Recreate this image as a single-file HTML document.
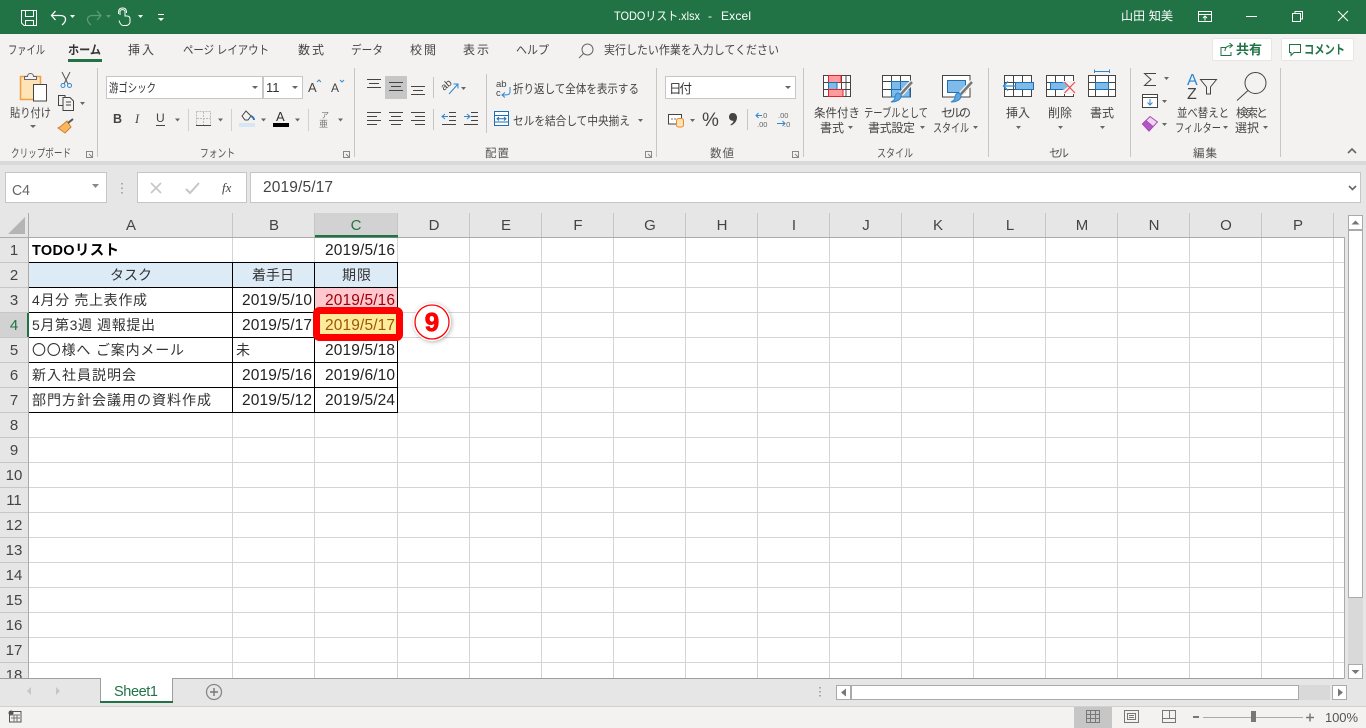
<!DOCTYPE html>
<html lang="ja"><head><meta charset="utf-8"><title>TODOリスト.xlsx - Excel</title>
<style>
html,body{margin:0;padding:0;background:#e6e6e6;width:1366px;height:728px;overflow:hidden}
svg{position:absolute;left:0;top:0;display:block}
text{font-family:"Liberation Sans","Noto Sans CJK JP",sans-serif;fill:#444;font-size:12px}
.c{font-size:15.5px;fill:#222}
.j{font-size:14px;fill:#333}
.h{font-size:15px;fill:#444;text-anchor:middle}
.g{font-size:11.5px;fill:#555}
.tw{fill:#fff}
.i{fill:none;stroke:#444}
.d{fill:#666}
</style></head><body>
<svg width="1366" height="728" viewBox="0 0 1366 728">
<defs>
<filter id="sh" x="-30%" y="-30%" width="160%" height="160%"><feDropShadow dx="1" dy="1" stdDeviation="2" flood-color="#000" flood-opacity=".3"/></filter>
</defs>

<!-- backgrounds -->
<rect width="1366" height="34" fill="#217346"/>
<rect y="34" width="1366" height="127" fill="#f3f2f1"/>
<rect y="161" width="1366" height="4" fill="#d9d9d9"/>
<rect y="165" width="1366" height="563" fill="#e6e6e6"/>

<!-- title bar -->
<g fill="none" stroke="#fff">
<path d="M21.500 10.500H36.500V25.500H24L21.500 23Z"/>
<path d="M25.500 10.500V16.500H33.500V10.500M25.500 25.500V20.500H33.500V25.500"/>
<path d="M52 15.500H60C67 15.500 67 21 62 25M55.500 11L51.500 15.500L55.500 20" stroke-width="1.300"/>
<path d="M101 15.500H93C86 15.500 86 21 91 25M97 11L101 15.500L97 20" stroke="#5f9a7c" stroke-width="1.300"/>
<path d="M120 15V11.500C120 9 125 9 125 11.500V16H127C129 16 130 17 130 19V22C130 24 128 25.500 126 25.500H123C121 25.500 119.500 22 119 20.500"/>
<path d="M118.500 14C118.500 10 119 8 122.500 8C126 8 126.500 10 126.500 13"/>
<path d="M1198.500 11.500H1211.500V21.500H1198.500ZM1198.500 14.500H1211.500M1205 20.500V16M1203 18L1205 16L1207 18"/>
<path d="M1246 16.500H1257"/>
<path d="M1292.500 13.500H1300.500V21.500H1292.500ZM1295 13V11.500H1302.500V19H1301"/>
<path d="M1338 11L1348 21M1348 11L1338 21"/>
</g>
<path d="M70 15h5l-2.500 3zM138 15h5l-2.500 3zM158 18h6l-3 3z" fill="#fff"/>
<path d="M106 15h5l-2.500 3z" fill="#5f9a7c"/>
<rect x="158" y="14" width="6" height="1" fill="#fff"/>
<text x="614" y="20" class="tw" textLength="86" lengthAdjust="spacingAndGlyphs">TODOリスト.xlsx</text>
<text x="708" y="20" class="tw">-</text>
<text x="721" y="20" class="tw" textLength="30">Excel</text>
<text x="1121" y="20" class="tw" textLength="52">山田 知美</text>

<!-- ribbon tabs -->
<text x="8" y="54" textLength="37" lengthAdjust="spacingAndGlyphs">ファイル</text>
<text x="68" y="54" textLength="33" lengthAdjust="spacingAndGlyphs" style="font-weight:700;fill:#333">ホーム</text>
<text x="128" y="54" textLength="26">挿入</text>
<text x="183" y="54" textLength="86" lengthAdjust="spacingAndGlyphs">ページ レイアウト</text>
<text x="298" y="54" textLength="26">数式</text>
<text x="351" y="54" textLength="32" lengthAdjust="spacingAndGlyphs">データ</text>
<text x="410" y="54" textLength="26">校閲</text>
<text x="463" y="54" textLength="26">表示</text>
<text x="516" y="54" textLength="33" lengthAdjust="spacingAndGlyphs">ヘルプ</text>
<text x="604" y="54" textLength="175" lengthAdjust="spacingAndGlyphs">実行したい作業を入力してください</text>
<rect x="68" y="59" width="34" height="3" fill="#217346"/>
<circle cx="587.500" cy="49.500" r="5.500" fill="none" stroke="#666"/>
<path d="M583.500 53.500L579 58" stroke="#666" fill="none"/>
<rect x="1212.500" y="38.500" width="59" height="22" rx="1" fill="#fff" stroke="#e6e6e6"/>
<rect x="1281.500" y="38.500" width="72" height="22" rx="1" fill="#fff" stroke="#e6e6e6"/>
<path d="M1226 47.500H1221V55.500H1231V52M1225 51C1225 47 1228 45.500 1232 45.500M1229.500 43L1232.500 45.500L1229.500 48" fill="none" stroke="#217346"/>
<text x="1236" y="54" textLength="26" style="font-size:13px;font-weight:700;fill:#217346">共有</text>
<path d="M1289.500 44.500H1300.500V52.500H1294L1291 55.500V52.500H1289.500Z" fill="none" stroke="#217346"/>
<text x="1304" y="54" textLength="41" lengthAdjust="spacingAndGlyphs" style="font-size:12.500px;font-weight:700;fill:#217346">コメント</text>

<!-- group dividers -->
<path d="M97.500 68V157M354.500 68V157M656.500 68V157M803.500 68V157M988.500 68V157M1130.500 68V157M1280.500 68V157" stroke="#c6c6c6"/>
<path d="M1348 153l4-4 4 4" fill="none" stroke="#666" stroke-width="1.600"/>
<g fill="none" stroke="#888">
<path d="M86.500 151.500h6v6h-6zM89 154l3 3"/>
<path d="M343.500 151.500h6v6h-6zM346 154l3 3"/>
<path d="M645.500 151.500h6v6h-6zM648 154l3 3"/>
<path d="M792.500 151.500h6v6h-6zM795 154l3 3"/>
</g>

<!-- clipboard group -->
<rect x="20.500" y="76.500" width="20" height="23" fill="#fde3b5" stroke="#f0a040" stroke-width="1.500"/>
<path d="M24.500 76.500h3c0-4 6-4 6 0h3v3h-12z" fill="#f3f2f1" stroke="#666"/>
<rect x="33.500" y="84.500" width="13" height="16.500" fill="#fff" stroke="#444"/>
<text x="10" y="117" textLength="41" lengthAdjust="spacingAndGlyphs">貼り付け</text>
<path class="d" d="M30 125h6l-3 3zM80 102h5l-2.500 3z"/>
<path d="M62 72L68 84M70 72L64 84" stroke="#555" fill="none"/>
<circle cx="63" cy="85.500" r="2" fill="none" stroke="#2e86d0"/>
<circle cx="69.500" cy="85.500" r="2" fill="none" stroke="#2e86d0"/>
<path d="M63 105.500H58.500V95.500H65V97M63 97.500H70L73.500 101V110.500H63V97.500ZM66 102H71M66 105H71" fill="none" stroke="#444"/>
<path d="M60 127L67 121L71 127L65 133L58 128Z" fill="#f8b860" stroke="#d08030"/>
<path d="M68 123L73 119" stroke="#555" stroke-width="2"/>
<text x="11" y="157" class="g" textLength="60" lengthAdjust="spacingAndGlyphs">クリップボード</text>

<!-- font group -->
<rect x="106.500" y="76.500" width="156" height="22" fill="#fff" stroke="#c6c6c6"/>
<rect x="263.500" y="76.500" width="39" height="22" fill="#fff" stroke="#c6c6c6"/>
<text x="109" y="92" textLength="47" lengthAdjust="spacingAndGlyphs" style="fill:#333">游ゴシック</text>
<text x="266" y="92" style="fill:#333;font-size:13px">11</text>
<path class="d" d="M252 86h6l-3 3zM292 86h6l-3 3z"/>
<text x="308" y="92" style="font-size:13px">A</text>
<path d="M317 82l2-2 2 2" fill="none" stroke="#3a87c8"/>
<text x="331" y="92">A</text>
<path d="M340 80l2 2 2-2" fill="none" stroke="#3a87c8"/>
<text x="113" y="123" style="font-size:12.500px;font-weight:700">B</text>
<text x="135" y="123" style="font-size:12.500px;font-style:italic;font-family:'Liberation Serif',serif">I</text>
<text x="156" y="122">U</text>
<path d="M156 125.500h9" stroke="#444"/>
<path class="d" d="M175 118.500h5l-2.500 3zM218 118.500h5l-2.500 3zM261 118.500h5l-2.500 3zM295 118.500h5l-2.500 3zM338 118.500h5l-2.500 3z"/>
<path d="M196.500 111.500H210.500V125M196.500 111.500V125M203.500 112V125M197 118.500H210" fill="none" stroke="#bbb" stroke-dasharray="2 1"/>
<path d="M196 125.500H211" stroke="#444"/>
<path d="M188.500 109V131M231.500 109V131M308.500 109V131" stroke="#d0d0d0"/>
<rect x="239" y="123" width="16" height="4" fill="#d6e6f4"/>
<path d="M242 116l4-5 5 5-3 4h-3z" fill="none" stroke="#444"/>
<path d="M251 116c2 1 3 2 3 4" fill="none" stroke="#2e75b6" stroke-width="2"/>
<text x="276" y="121" style="font-size:13px;fill:#333">A</text>
<rect x="273" y="123" width="16" height="4" fill="#000"/>
<text x="321" y="118" style="font-size:8px;fill:#777">ア</text>
<text x="319" y="127" style="font-size:9px;fill:#777">亜</text>
<text x="200" y="157" class="g" textLength="35" lengthAdjust="spacingAndGlyphs">フォント</text>

<!-- alignment group -->
<rect x="385" y="76" width="22" height="23" fill="#c6c6c6"/>
<g stroke="#444" fill="none">
<path d="M367 79.500H381M369 83.500H379M367 87.500H381"/>
<path d="M389 82.500H403M391 86.500H401M389 90.500H403"/>
<path d="M411 86.500H425M413 90.500H423M411 94.500H425"/>
<path d="M367 112.500H381M367 116.500H377M367 120.500H381M367 124.500H377"/>
<path d="M389 112.500H403M391 116.500H401M389 120.500H403M391 124.500H401"/>
<path d="M411 112.500H425M415 116.500H425M411 120.500H425M415 124.500H425"/>
<path d="M449 112.500H456M449 116.500H456M449 120.500H456M442 124.500H456"/>
<path d="M471 112.500H478M471 116.500H478M471 120.500H478M464 124.500H478"/>
</g>
<path d="M442 116.500H448M445 114L442 116.500L445 119M464 116.500H470M467 114L470 116.500L467 119" fill="none" stroke="#2e86d0"/>
<text transform="translate(444 91) rotate(-40)" style="font-size:10px;fill:#444">ab</text>
<path d="M449 94L458 84M453.500 84H458V88.500" fill="none" stroke="#2e86d0"/>
<path class="d" d="M461 87h5l-2.500 3z"/>
<path d="M433.500 77V98M433.500 109V130M486.500 74V133" stroke="#c6c6c6"/>
<text x="496" y="87" style="font-size:9.500px;fill:#444">ab</text>
<text x="496" y="96" style="font-size:9.500px;fill:#444">c</text>
<path d="M510 87V92C510 95 507 95 502 95M505 92.500L502 95L505 97.500" fill="none" stroke="#2e86d0"/>
<text x="513" y="93" textLength="126" lengthAdjust="spacingAndGlyphs">折り返して全体を表示する</text>
<rect x="494.500" y="111.500" width="14" height="14" fill="#fff" stroke="#1f6fb5"/>
<path d="M494.500 115.500H508.500M494.500 122H508.500" stroke="#1f6fb5"/>
<path d="M497 118.700H506M499 117L497 118.700L499 120.500M504 117L506 118.700L504 120.500" fill="none" stroke="#1f6fb5"/>
<text x="513" y="125" textLength="117" lengthAdjust="spacingAndGlyphs">セルを結合して中央揃え</text>
<path class="d" d="M638 119h5l-2.500 3z"/>
<text x="485" y="157" class="g" textLength="24">配置</text>

<!-- number group -->
<rect x="665.500" y="76.500" width="130" height="22" fill="#fff" stroke="#c6c6c6"/>
<text x="669" y="93" textLength="23" style="font-size:12.500px;fill:#333">日付</text>
<path class="d" d="M785 86h6l-3 3zM690 119h5l-2.500 3z"/>
<rect x="668.500" y="114.500" width="13" height="9.500" fill="#fff" stroke="#444"/>
<path d="M671 119H679" stroke="#777" stroke-dasharray="2 1"/>
<rect x="676.500" y="118.500" width="7" height="8.500" rx="2" fill="#fde3b5" stroke="#ed8b2c"/>
<text x="702" y="126" style="font-size:19px;fill:#444">%</text>
<path d="M732.500 113C736 113 737 115.500 737 117.500C737 121 734.500 124 731 125.500L730.500 124.500C732.500 123.500 733.500 122 733.500 120.800C731 121 729 119.500 729 117C729 114.800 730.500 113 732.500 113Z" fill="#444"/>
<path d="M747.500 109V130" stroke="#c6c6c6"/>
<text x="761" y="118" style="font-size:7.500px;fill:#666">.0</text>
<text x="757" y="127" style="font-size:7.500px;fill:#666">.00</text>
<text x="778" y="118" style="font-size:7.500px;fill:#666">.00</text>
<text x="784" y="127" style="font-size:7.500px;fill:#666">.0</text>
<path d="M756 115.500H762M758.500 113L756 115.500L758.500 118M777 123.500H785M782.500 121L785 123.500L782.500 126" fill="none" stroke="#2e86d0"/>
<text x="710" y="157" class="g" textLength="24">数値</text>

<!-- styles group -->
<rect x="823.500" y="75.500" width="27" height="21" fill="#fff" stroke="#444"/>
<path d="M823.500 82.500H850.500M823.500 89.500H850.500M841.500 75.500V96.500M846 75.500V96.500" stroke="#444" fill="none"/>
<rect x="828.500" y="75.500" width="12.500" height="7" fill="#ff9a9f" stroke="#e0252b"/>
<rect x="828.500" y="82.500" width="8.500" height="7" fill="#7fbbe9" stroke="#1f6fb5"/>
<rect x="828.500" y="89.500" width="14.500" height="7" fill="#ff9a9f" stroke="#e0252b"/>
<text x="814" y="117" textLength="46" lengthAdjust="spacingAndGlyphs">条件付き</text>
<text x="820" y="132" textLength="24">書式</text>
<path class="d" d="M848 126h5l-2.500 3z"/>

<rect x="882.500" y="75.500" width="28" height="21.500" fill="#fff" stroke="#444"/>
<path d="M882.500 81.500H910.500M882.500 89.500H910.500M891.500 75.500V97M900.500 75.500V81" stroke="#444" fill="none"/>
<rect x="891.500" y="81.500" width="18.500" height="15.500" fill="#7fbbe9" stroke="#1f6fb5"/>
<path d="M891.500 89.500H910M900.500 81.500V97" stroke="#1f6fb5" fill="none"/>
<path d="M901 94L912 82" stroke="#f3f2f1" stroke-width="5"/>
<path d="M901 94L912 82" stroke="#777" stroke-width="2.500"/>
<path d="M891 102C896 102 902 100 901 94.500C898 91.500 895 93.500 895 97.500C895 99.500 893 101 891 102Z" fill="#5ea6e0" stroke="#2e86d0"/>
<text x="864" y="117" textLength="64" lengthAdjust="spacingAndGlyphs">テーブルとして</text>
<text x="868" y="132" textLength="47">書式設定</text>
<path class="d" d="M920 126h5l-2.500 3z"/>

<rect x="942.500" y="75.500" width="27.500" height="21.500" fill="#fff" stroke="#444"/>
<rect x="947.500" y="80.500" width="18" height="12" fill="#7fbbe9" stroke="#1f6fb5"/>
<path d="M961 94L972 82" stroke="#f3f2f1" stroke-width="5"/>
<path d="M961 94L972 82" stroke="#777" stroke-width="2.500"/>
<path d="M951 102C956 102 962 100 961 94.500C958 91.500 955 93.500 955 97.500C955 99.500 953 101 951 102Z" fill="#5ea6e0" stroke="#2e86d0"/>
<text x="941" y="117" textLength="30">セルの</text>
<text x="933" y="132" textLength="36" lengthAdjust="spacingAndGlyphs">スタイル</text>
<path class="d" d="M973 126h5l-2.500 3z"/>
<text x="877" y="157" class="g" textLength="36" lengthAdjust="spacingAndGlyphs">スタイル</text>

<!-- cells group -->
<rect x="1004.500" y="75.500" width="27" height="21" fill="#fff" stroke="#444"/>
<path d="M1004.500 82.500H1031.500M1004.500 89.500H1031.500M1013.500 75.500V96.500M1022.500 75.500V96.500" stroke="#444" fill="none"/>
<rect x="1015.500" y="82.500" width="18" height="7" fill="#7fbbe9" stroke="#1f6fb5"/>
<path d="M1003.500 86H1016M1008 81.500L1003.500 86L1008 90.500" fill="none" stroke="#2e86d0" stroke-width="1.300"/>
<rect x="1046.500" y="75.500" width="27" height="21" fill="#fff" stroke="#444"/>
<path d="M1046.500 82.500H1073.500M1046.500 89.500H1073.500M1055.500 75.500V96.500M1064.500 75.500V96.500" stroke="#444" fill="none"/>
<rect x="1050.500" y="82.500" width="13" height="7" fill="#7fbbe9" stroke="#1f6fb5"/>
<rect x="1064" y="81" width="12" height="13" fill="#f3f2f1"/>
<path d="M1063.500 82.500L1068 86L1063.500 89.500Z" fill="#7fbbe9" stroke="#7fbbe9"/>
<path d="M1064.500 82L1075 93M1075 82L1064.500 93" stroke="#f3484d" fill="none" stroke-width="1.200"/>
<rect x="1088.500" y="75.500" width="27" height="21" fill="#fff" stroke="#444"/>
<path d="M1088.500 82.500H1115.500M1088.500 89.500H1115.500M1095.500 75.500V96.500M1108.500 75.500V96.500" stroke="#444" fill="none"/>
<rect x="1095.500" y="82.500" width="13" height="7" fill="#7fbbe9" stroke="#1f6fb5"/>
<path d="M1094.500 69.500V73M1109.500 69.500V73M1094.500 71.500H1109.500" stroke="#2e86d0" fill="none"/>
<text x="1006" y="117" textLength="24">挿入</text>
<text x="1048" y="117" textLength="24">削除</text>
<text x="1090" y="117" textLength="24">書式</text>
<path class="d" d="M1016 126h5l-2.500 3zM1058 126h5l-2.500 3zM1100 126h5l-2.500 3z"/>
<text x="1049" y="157" class="g" textLength="20">セル</text>

<!-- editing group -->
<path d="M1156 73.500H1144.500L1151 79.500L1144.500 85.500H1156" fill="none" stroke="#444"/>
<path class="d" d="M1164 77h5l-2.500 3zM1162 100h5l-2.500 3zM1162 123h5l-2.500 3z"/>
<rect x="1142.500" y="94.500" width="15" height="13" fill="#fff" stroke="#444"/>
<path d="M1142.500 97.500H1157.500" stroke="#444"/>
<path d="M1150 99V105M1147.500 102.500L1150 105L1152.500 102.500" fill="none" stroke="#2e86d0"/>
<path d="M1142.500 124L1150 116.500L1157.500 122L1149 131Z" fill="#f0d5f2" stroke="#a64db5"/>
<path d="M1142.500 124L1146 120.500L1153 126.500L1149 131Z" fill="#b655c6" stroke="#a64db5"/>
<text x="1187" y="85" style="font-size:16px;fill:#2e86d0">A</text>
<text x="1187" y="99" style="font-size:16px;fill:#444">Z</text>
<path d="M1200.500 79.500H1216.500L1210.500 87V94L1206.500 94V87Z" fill="none" stroke="#444"/>
<circle cx="1255.500" cy="83" r="10.500" fill="none" stroke="#444"/>
<path d="M1248 90.500L1237 100.500" stroke="#444" fill="none"/>
<text x="1177" y="117" textLength="52" lengthAdjust="spacingAndGlyphs">並べ替えと</text>
<text x="1175" y="132" textLength="46" lengthAdjust="spacingAndGlyphs">フィルター</text>
<path class="d" d="M1223 126h5l-2.500 3zM1263 126h5l-2.500 3z"/>
<text x="1236" y="117" textLength="32">検索と</text>
<text x="1235" y="132" textLength="24">選択</text>
<text x="1193" y="157" class="g" textLength="24">編集</text>

<!-- formula bar -->
<rect x="5.500" y="172.500" width="101" height="30" fill="#fff" stroke="#c6c6c6"/>
<text x="12" y="195" textLength="18" lengthAdjust="spacingAndGlyphs" style="font-size:15px;fill:#666">C4</text>
<path d="M92 184h7l-3.500 4z" fill="#888"/>
<path d="M122 183v1.500M122 187.500v1.500M122 192v1.500" stroke="#aaa" stroke-width="2"/>
<rect x="137.500" y="172.500" width="109" height="30" fill="#fff" stroke="#c6c6c6"/>
<path d="M151 183L161 193M161 183L151 193" stroke="#c6c6c6" stroke-width="1.600" fill="none"/>
<path d="M186 189L190 193L199 183" stroke="#c6c6c6" stroke-width="2" fill="none"/>
<text x="222" y="192" style="font-size:13px;font-style:italic;font-family:'Liberation Serif',serif;fill:#444">fx</text>
<rect x="250.500" y="172.500" width="1110" height="30" fill="#fff" stroke="#c6c6c6"/>
<text x="263" y="192" textLength="70" style="font-size:15.500px;fill:#444">2019/5/17</text>
<path d="M1349 186l3.500 3.500 3.500-3.500" fill="none" stroke="#666" stroke-width="1.600"/>

<!-- headers -->
<path d="M25 217V234H8Z" fill="#b5b5b5"/>
<rect x="315" y="213" width="83" height="24" fill="#d2d2d2"/>
<rect x="0" y="313" width="28" height="24" fill="#d2d2d2"/>
<path d="M232.500 213V237M314.500 213V237M397.500 213V237M469.500 213V237M541.500 213V237M613.500 213V237M685.500 213V237M757.500 213V237M829.500 213V237M901.500 213V237M973.500 213V237M1045.500 213V237M1117.500 213V237M1189.500 213V237M1261.500 213V237M1333.500 213V237" stroke="#c6c6c6"/>
<path d="M0 262.500H28M0 287.500H28M0 312.500H28M0 337.500H28M0 362.500H28M0 387.500H28M0 412.500H28M0 437.500H28M0 462.500H28M0 487.500H28M0 512.500H28M0 537.500H28M0 562.500H28M0 587.500H28M0 612.500H28M0 637.500H28M0 662.500H28" stroke="#c6c6c6"/>
<text class="h" x="131" y="230">A</text>
<text class="h" x="274" y="230">B</text>
<text class="h" x="356" y="230" style="fill:#217346">C</text>
<text class="h" x="434" y="230">D</text>
<text class="h" x="506" y="230">E</text>
<text class="h" x="578" y="230">F</text>
<text class="h" x="650" y="230">G</text>
<text class="h" x="722" y="230">H</text>
<text class="h" x="794" y="230">I</text>
<text class="h" x="866" y="230">J</text>
<text class="h" x="938" y="230">K</text>
<text class="h" x="1010" y="230">L</text>
<text class="h" x="1082" y="230">M</text>
<text class="h" x="1154" y="230">N</text>
<text class="h" x="1226" y="230">O</text>
<text class="h" x="1298" y="230">P</text>
<text class="h" x="14" y="255">1</text>
<text class="h" x="14" y="280">2</text>
<text class="h" x="14" y="305">3</text>
<text class="h" x="14" y="330" style="fill:#217346">4</text>
<text class="h" x="14" y="355">5</text>
<text class="h" x="14" y="380">6</text>
<text class="h" x="14" y="405">7</text>
<text class="h" x="14" y="430">8</text>
<text class="h" x="14" y="455">9</text>
<text class="h" x="14" y="480">10</text>
<text class="h" x="14" y="505">11</text>
<text class="h" x="14" y="530">12</text>
<text class="h" x="14" y="555">13</text>
<text class="h" x="14" y="580">14</text>
<text class="h" x="14" y="605">15</text>
<text class="h" x="14" y="630">16</text>
<text class="h" x="14" y="655">17</text>
<text class="h" x="14" y="680">18</text>

<!-- sheet -->
<rect x="29" y="238" width="1315" height="440" fill="#fff"/>
<rect x="29" y="263" width="368" height="24" fill="#ddebf7"/>
<rect x="315" y="288" width="82" height="24" fill="#ffc7ce"/>
<path d="M232.500 238V678M314.500 238V678M397.500 238V678M469.500 238V678M541.500 238V678M613.500 238V678M685.500 238V678M757.500 238V678M829.500 238V678M901.500 238V678M973.500 238V678M1045.500 238V678M1117.500 238V678M1189.500 238V678M1261.500 238V678M1333.500 238V678" stroke="#d4d4d4"/>
<path d="M29 262.500H1344M29 287.500H1344M29 312.500H1344M29 337.500H1344M29 362.500H1344M29 387.500H1344M29 412.500H1344M29 437.500H1344M29 462.500H1344M29 487.500H1344M29 512.500H1344M29 537.500H1344M29 562.500H1344M29 587.500H1344M29 612.500H1344M29 637.500H1344M29 662.500H1344" stroke="#d4d4d4"/>
<path d="M29 262.500H398M29 287.500H398M29 312.500H398M29 337.500H398M29 362.500H398M29 387.500H398M29 412.500H398M232.500 262V413M314.500 262V413M397.500 262V413" stroke="#000"/>
<path d="M28.500 213V678" stroke="#ababab"/>
<path d="M0 237.500H1344.500V678" fill="none" stroke="#ababab"/>
<rect x="315" y="235" width="83" height="2.500" fill="#217346"/>
<rect x="27" y="313" width="2" height="24" fill="#217346"/>

<text x="32" y="255" textLength="87" style="font-size:14.500px;font-weight:700;fill:#000">TODOリスト</text>
<text x="110" y="280" textLength="42" class="j">タスク</text>
<text x="252" y="280" textLength="42" class="j">着手日</text>
<text x="342" y="280" textLength="29" class="j">期限</text>
<text x="32" y="305" textLength="115" class="j">4月分 売上表作成</text>
<text x="32" y="330" textLength="123" class="j">5月第3週 週報提出</text>
<text x="32" y="355" textLength="152" class="j">〇〇様へ ご案内メール</text>
<text x="236" y="355" textLength="13" class="j">未</text>
<text x="32" y="380" textLength="104" class="j">新入社員説明会</text>
<text x="32" y="405" textLength="179" class="j">部門方針会議用の資料作成</text>
<text x="242" y="305" textLength="70" class="c">2019/5/10</text>
<text x="242" y="330" textLength="70" class="c">2019/5/17</text>
<text x="242" y="380" textLength="70" class="c">2019/5/16</text>
<text x="242" y="405" textLength="70" class="c">2019/5/12</text>
<text x="325" y="255" textLength="70" class="c">2019/5/16</text>
<text x="325" y="305" textLength="70" class="c" style="fill:#9c0006">2019/5/16</text>
<text x="325" y="355" textLength="70" class="c">2019/5/18</text>
<text x="325" y="380" textLength="70" class="c">2019/6/10</text>
<text x="325" y="405" textLength="70" class="c">2019/5/24</text>

<!-- highlighted cell and callout -->
<rect x="320" y="314" width="76" height="20" fill="#ffeb9c"/>
<text x="325" y="330" textLength="70" class="c" style="fill:#9c5700">2019/5/17</text>
<rect x="316.500" y="310.500" width="83" height="27" rx="3" fill="none" stroke="#ff0000" stroke-width="7"/>
<circle cx="432" cy="322" r="19" fill="#fff" filter="url(#sh)"/>
<circle cx="432" cy="322" r="17" fill="none" stroke="#ff0000" stroke-width="1.300"/>
<text x="432" y="331" text-anchor="middle" style="font-size:26px;font-weight:700;fill:#ff0000;stroke:#ff0000;stroke-width:.8">9</text>

<!-- sheet tab bar -->
<rect x="0" y="678" width="1366" height="28" fill="#e6e6e6"/>
<path d="M0 678.500H100.500M172.500 678.500H1344.500" stroke="#9e9e9e"/>
<rect x="100.500" y="678" width="72" height="23" fill="#fff"/>
<path d="M100.500 678V702M172.500 678V702" stroke="#9e9e9e"/>
<rect x="100" y="701" width="73" height="2" fill="#217346"/>
<text x="114" y="696" textLength="44" style="font-size:14.500px;fill:#217346">Sheet1</text>
<path d="M31 687V695L27 691ZM56 687V695L60 691Z" fill="#c6c6c6"/>
<circle cx="214" cy="692" r="7.500" fill="none" stroke="#888" stroke-width="1.300"/>
<path d="M210 692H218M214 688V696" stroke="#777" stroke-width="1.400"/>
<path d="M820 687v1.500M820 691v1.500M820 695v1.500" stroke="#aaa" stroke-width="2"/>

<!-- horizontal scrollbar -->
<rect x="836.500" y="685.500" width="14" height="14" fill="#fff" stroke="#aaa"/>
<path d="M846 688.500V696.500L841 692.500Z" fill="#777"/>
<rect x="851.500" y="685.500" width="447" height="14" fill="#fff" stroke="#aaa"/>
<rect x="1299" y="685" width="31" height="15" fill="#d9d9d9"/>
<rect x="1332.500" y="685.500" width="14" height="14" fill="#fff" stroke="#aaa"/>
<path d="M1338 688.500V696.500L1343 692.500Z" fill="#777"/>

<!-- vertical scrollbar -->
<rect x="1348" y="215" width="15" height="463" fill="#d9d9d9"/>
<rect x="1348.500" y="215.500" width="14" height="14" fill="#fff" stroke="#aaa"/>
<path d="M1351.500 224.500H1359.500L1355.500 220.500Z" fill="#777"/>
<rect x="1348.500" y="230.500" width="14" height="367" fill="#fff" stroke="#aaa"/>
<rect x="1348.500" y="664.500" width="14" height="14" fill="#fff" stroke="#aaa"/>
<path d="M1351.500 670H1359.500L1355.500 674Z" fill="#777"/>

<!-- status bar -->
<rect y="706" width="1366" height="22" fill="#f3f2f1"/>
<path d="M0 706.500H1366" stroke="#d0d0d0"/>
<circle cx="11" cy="713" r="2.500" fill="#555"/>
<rect x="9.500" y="711.500" width="11.500" height="10.500" fill="none" stroke="#555"/>
<path d="M11 715H20M11 718H20M14 715V722M17 715V722" stroke="#777"/>
<rect x="1074" y="707" width="38" height="21" fill="#c6c6c6"/>
<path d="M1086.500 710.500H1099.500V722.500H1086.500ZM1086.500 714.500H1099.500M1086.500 718.500H1099.500M1090.500 710.500V722.500M1095.500 710.500V722.500" fill="none" stroke="#777"/>
<path d="M1124.500 710.500H1138.500V722.500H1124.500ZM1127.500 713.500H1135.500V719.500H1127.500ZM1129 715.500H1134M1129 717.500H1134" fill="none" stroke="#777"/>
<path d="M1162.500 710.500H1175.500V722.500H1162.500ZM1162.500 718.500H1175.500M1169.500 710.500V718.500" fill="none" stroke="#777"/>
<rect x="1193" y="716" width="6" height="2" fill="#777"/>
<path d="M1203 717.500H1303" stroke="#aaa"/>
<rect x="1251" y="711" width="5" height="11" fill="#777"/>
<path d="M1306 717.500H1314M1310 713.500V721.500" stroke="#777" stroke-width="1.500"/>
<text x="1325" y="722" textLength="33" style="font-size:13px;fill:#555">100%</text>
</svg>
</body></html>
